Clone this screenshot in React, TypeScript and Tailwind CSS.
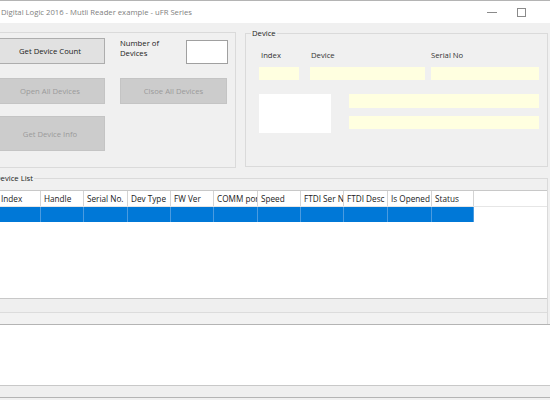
import React from 'react';

const columns: { name: string; w: string }[] = [
  { name: 'Index', w: 'w-[43px]' },
  { name: 'Handle', w: 'w-[43px]' },
  { name: 'Serial No.', w: 'w-[44px]' },
  { name: 'Dev Type', w: 'w-[43px]' },
  { name: 'FW Ver', w: 'w-[43px]' },
  { name: 'COMM port', w: 'w-[44px]' },
  { name: 'Speed', w: 'w-[43px]' },
  { name: 'FTDI Ser No', w: 'w-[43px]' },
  { name: 'FTDI Desc', w: 'w-[44px]' },
  { name: 'Is Opened', w: 'w-[44px]' },
  { name: 'Status', w: 'w-[42px]' },
];

function TitleBar() {
  return (
    <div className="flex h-[23px] items-center justify-between border-t border-[#b4b4b4] bg-white">
      <span className="pl-[1px] text-[#808080]">Digital Logic 2016 - Mutli Reader example - uFR Series</span>
      <div className="flex items-center gap-[20px] pr-[24px]">
        <svg width="10" height="10" viewBox="0 0 10 10">
          <line x1="0" y1="5.5" x2="10" y2="5.5" stroke="#8a8a8a" strokeWidth="1" />
        </svg>
        <svg width="9" height="9" viewBox="0 0 9 9">
          <rect x="0.5" y="0.5" width="8" height="8" fill="none" stroke="#8a8a8a" strokeWidth="1" />
        </svg>
      </div>
    </div>
  );
}

function Btn({ label, disabled, className }: { label: string; disabled?: boolean; className: string }) {
  return (
    <div
      className={
        'flex items-center justify-center border ' +
        (disabled ? 'border-[#c4c4c4] bg-[#cccccc] text-[#9a9a9a] ' : 'border-[#adadad] bg-[#e1e1e1] text-[#1a1a1a] ') +
        className
      }
    >
      {label}
    </div>
  );
}

function Field({ className }: { className: string }) {
  return <div className={'bg-[#ffffe0] ' + className} />;
}

export default function App() {
  return (
    <div className="h-[400px] w-[550px] overflow-hidden bg-[#f0f0f0] font-['Open_Sans',sans-serif] text-[7.7px] leading-[10px] text-[#1a1a1a]">
      <TitleBar />

      <div className="flex">
        {/* left control panel */}
        <div className="ml-[-10px] mt-[9px] h-[136px] w-[246px] border border-[#dadada] pl-[4px] pt-[5px]">
          <div className="flex items-start">
            <Btn label="Get Device Count" className="h-[26px] w-[110px]" />
            <div className="ml-[15px] w-[66px] leading-[10px]">
              Number of
              <br />
              Devices
            </div>
            <div className="mt-[2px] h-[24px] w-[42px] border border-[#a0a0a0] bg-white" />
          </div>
          <div className="mt-[14px] flex">
            <Btn label="Open All Devices" disabled className="h-[26px] w-[110px]" />
            <Btn label="Clsoe All Devices" disabled className="ml-[15px] h-[26px] w-[107px]" />
          </div>
          <Btn label="Get Device Info" disabled className="mt-[12px] h-[35px] w-[110px]" />
        </div>

        {/* Device group */}
        <div className="relative ml-[9px] mt-[10px] h-[134px] w-[303px] border border-[#dadada] pl-[13px] pt-[16px]">
          <span className="absolute left-[5px] top-[-6px] bg-[#f0f0f0] px-[1px] leading-[10px]">Device</span>
          <div className="flex text-[#333]">
            <span className="ml-[2px] w-[49px]">Index</span>
            <span className="ml-[1px] w-[120px]">Device</span>
            <span>Serial No</span>
          </div>
          <div className="mt-[7px] flex">
            <Field className="h-[13px] w-[40px]" />
            <Field className="ml-[11px] h-[13px] w-[115px]" />
            <Field className="ml-[6px] h-[13px] w-[108px]" />
          </div>
          <div className="mt-[14px] flex">
            <div className="h-[39px] w-[72px] bg-white" />
            <div className="ml-[18px] flex flex-col gap-[8px]">
              <Field className="h-[14px] w-[190px]" />
              <Field className="h-[13px] w-[190px]" />
            </div>
          </div>
        </div>
      </div>

      {/* Device List group */}
      <div className="relative ml-[-10px] mt-[10px] w-[558px] border-r border-t border-[#dadada] pt-[11px]">
        <span className="absolute left-[4px] top-[-6px] bg-[#f0f0f0] px-[1px] leading-[10px]">Device List</span>
        <div className="h-[108px] border-t border-[#c8c8c8] bg-white pl-[8px]">
          <div className="flex h-[16px] border-b border-[#e6e6e6] text-[8.2px]">
            {columns.map((c) => (
              <div
                key={c.name}
                className={c.w + ' flex shrink-0 items-center overflow-hidden whitespace-nowrap border-r border-[#d4d4d4] pl-[3px]'}
              >
                {c.name}
              </div>
            ))}
          </div>
          <div className="flex h-[15px]">
            {columns.map((c) => (
              <div key={c.name} className={c.w + ' shrink-0 border-r border-[#4a9be0] bg-[#0078d7]'} />
            ))}
          </div>
        </div>
        <div className="h-[14px] border-t border-[#c8c8c8] bg-[#efefef]" />
        <div className="h-[12px] border-t border-[#dcdcdc] bg-[#f2f2f2]" />
      </div>

      <div className="h-[61px] border-t border-[#b4b4b4] bg-white" />
      <div className="h-[12px] border-t border-[#c8c8c8] bg-[#efefef]" />
      <div className="h-[4px] border-t border-[#b4b4b4] bg-[#f0f0f0]" />
    </div>
  );
}
